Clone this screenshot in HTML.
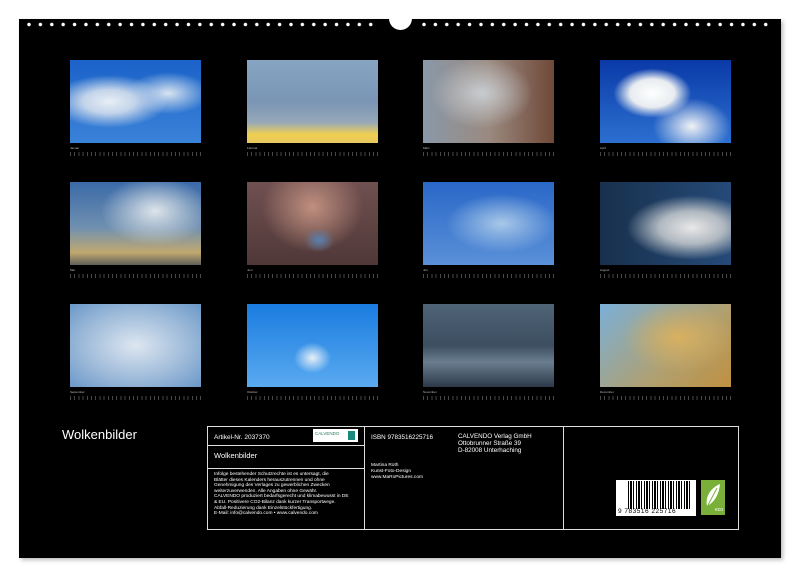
<!DOCTYPE html><html><head><meta charset="utf-8"><style>
*{margin:0;padding:0;box-sizing:border-box}
body{width:800px;height:577px;background:#fff;position:relative;overflow:hidden;font-family:"Liberation Sans",sans-serif;color:#fff}
.bg{position:absolute;left:19px;top:19px;width:762px;height:539px;background:#000;box-shadow:2px 2px 4px #bbb}
.dots{position:absolute;top:22px;height:5px;background:radial-gradient(circle at 3px 2.5px,#fff 1.5px,transparent 2px) 0 0/11.4px 5px repeat-x}
.hole{position:absolute;left:389px;top:12px;width:23px;height:18px;background:#fff;border-radius:0 0 12px 12px}
.p{position:absolute;width:131px;height:83px}
.lab{position:absolute;font-size:3px;color:#bbb}
.cal{position:absolute;width:131px;height:4px;background:repeating-linear-gradient(90deg,#666 0 1px,transparent 1px 4.2px);opacity:.7}
.t{position:absolute;font-size:7px;line-height:7.5px}
.box{position:absolute;border:1.5px solid #ddd}
</style></head><body>
<div class="bg"></div>
<div class="dots" style="left:26px;width:352px"></div>
<div class="dots" style="left:421px;width:352px"></div>
<div class="hole"></div>

<div class="p" style="left:70px;top:60px;background:radial-gradient(ellipse at 30% 50%,#e8eef5 0,#c3d4ea 20%,transparent 45%),radial-gradient(ellipse at 75% 40%,#d9e4f0 0,transparent 30%),linear-gradient(#1a62c8,#3a82d8)"></div>
<div class="p" style="left:247px;top:60px;background:linear-gradient(#87a5c3,#7a95b5 50%,#96a8b8 75%,#f0d050 90%,#e8c860)"></div>
<div class="p" style="left:423px;top:60px;background:radial-gradient(ellipse at 45% 40%,#c8ccd0,transparent 50%),linear-gradient(90deg,#8a98a8,#9a8a80 50%,#704838),linear-gradient(#888,#c07040)"></div>
<div class="p" style="left:600px;top:60px;background:radial-gradient(ellipse at 40% 40%,#fff 0,#e8ecf0 20%,transparent 35%),radial-gradient(ellipse at 70% 80%,#f0f2f5 0,transparent 30%),linear-gradient(#0a3aa8,#2c70d0)"></div>

<div class="p" style="left:70px;top:182px;background:radial-gradient(ellipse at 65% 35%,#dde4ea,transparent 45%),linear-gradient(#3a6aa8,#7090b0 55%,#c0a870 85%,#60605a)"></div>
<div class="p" style="left:247px;top:182px;background:radial-gradient(ellipse at 55% 70%,#5a80b0 0,transparent 15%),radial-gradient(ellipse at 50% 30%,#c09080,transparent 55%),linear-gradient(#705050,#503838)"></div>
<div class="p" style="left:423px;top:182px;background:radial-gradient(ellipse at 60% 50%,#a8c8e8,transparent 50%),linear-gradient(#2a68c8,#5a90d8)"></div>
<div class="p" style="left:600px;top:182px;background:radial-gradient(ellipse at 70% 55%,#e8e8e8 0,#b0b8c0 25%,transparent 50%),linear-gradient(90deg,#18304c,#254a78)"></div>

<div class="p" style="left:70px;top:304px;background:radial-gradient(ellipse at 50% 50%,#dde6f0,#9ab8d8 60%,#6a98c8)"></div>
<div class="p" style="left:247px;top:304px;background:radial-gradient(ellipse at 50% 65%,#e8f0f8 0,transparent 20%),linear-gradient(#1a7ce0,#5aaaf0)"></div>
<div class="p" style="left:423px;top:304px;background:linear-gradient(#506478,#3c4e60 50%,#6a7e90 70%,#2c3848)"></div>
<div class="p" style="left:600px;top:304px;background:radial-gradient(ellipse at 60% 40%,#d8b060,transparent 50%),linear-gradient(135deg,#7ab0d8,#b0a070 60%,#c09040)"></div>

<div class="lab" style="left:70px;top:146px">Januar</div><div class="cal" style="left:70px;top:152px"></div>
<div class="lab" style="left:247px;top:146px">Februar</div><div class="cal" style="left:247px;top:152px"></div>
<div class="lab" style="left:423px;top:146px">März</div><div class="cal" style="left:423px;top:152px"></div>
<div class="lab" style="left:600px;top:146px">April</div><div class="cal" style="left:600px;top:152px"></div>
<div class="lab" style="left:70px;top:268px">Mai</div><div class="cal" style="left:70px;top:274px"></div>
<div class="lab" style="left:247px;top:268px">Juni</div><div class="cal" style="left:247px;top:274px"></div>
<div class="lab" style="left:423px;top:268px">Juli</div><div class="cal" style="left:423px;top:274px"></div>
<div class="lab" style="left:600px;top:268px">August</div><div class="cal" style="left:600px;top:274px"></div>
<div class="lab" style="left:70px;top:390px">September</div><div class="cal" style="left:70px;top:396px"></div>
<div class="lab" style="left:247px;top:390px">Oktober</div><div class="cal" style="left:247px;top:396px"></div>
<div class="lab" style="left:423px;top:390px">November</div><div class="cal" style="left:423px;top:396px"></div>
<div class="lab" style="left:600px;top:390px">Dezember</div><div class="cal" style="left:600px;top:396px"></div>

<div style="position:absolute;left:62px;top:427px;font-size:13px">Wolkenbilder</div>

<div class="box" style="left:207px;top:426px;width:532px;height:104px"></div>
<div class="box" style="left:364px;top:426px;width:0;height:104px;border-width:0 0 0 1.5px"></div>
<div class="box" style="left:563px;top:426px;width:0;height:104px;border-width:0 0 0 1.5px"></div>
<div class="box" style="left:207px;top:445px;width:158px;height:0;border-width:1.5px 0 0 0"></div>
<div class="box" style="left:207px;top:468px;width:158px;height:0;border-width:1.5px 0 0 0"></div>
<div class="t" style="left:214px;top:434px;font-size:6.5px">Artikel-Nr. 2037370</div>
<div style="position:absolute;left:313px;top:429px;width:45px;height:13px;background:#fff;color:#2a7a5a;font-size:4.5px;padding:2px 2px;overflow:hidden">CALVENDO<span style="position:absolute;right:3px;top:2px;width:7px;height:9px;background:#1a8a7a"></span></div>
<div class="t" style="left:214px;top:452px;font-size:7.5px">Wolkenbilder</div>
<div class="t" style="left:214px;top:472px;font-size:4.8px;line-height:5.6px">Infolge bestehender Schutzrechte ist es untersagt, die<br>Blätter dieses Kalenders herauszutrennen und ohne<br>Genehmigung des Verlages zu gewerblichen Zwecken<br>weiterzuverwenden. Alle Angaben ohne Gewähr.<br>CALVENDO produziert bedarfsgerecht und klimabewusst in DE<br>&amp; EU. Positivere CO2-Bilanz dank kurzer Transportwege.<br>Abfall-Reduzierung dank Einzelstückfertigung.<br>E-Mail: info@calvendo.com • www.calvendo.com</div>
<div class="t" style="left:371px;top:434px;font-size:6.3px">ISBN 9783516225716</div>
<div class="t" style="left:458px;top:433px;font-size:6.3px;line-height:7px">CALVENDO Verlag GmbH<br>Ottobrunner Straße 39<br>D-82008 Unterhaching</div>
<div class="t" style="left:371px;top:463px;font-size:4.8px;line-height:5.8px">Martina Roth<br>Kunst-Foto-Design<br>www.MaRoPictures.com</div>
<div style="position:absolute;left:616px;top:480px;width:80px;height:36px;background:#fff"></div>
<div style="position:absolute;left:628px;top:481px;width:62px;height:28px;background:repeating-linear-gradient(90deg,#000 0 1px,#fff 1px 2px,#000 2px 4px,#fff 4px 5px,#000 5px 6px,#fff 6px 8px)"></div>
<div style="position:absolute;left:618px;top:508px;font-size:6.5px;color:#000;letter-spacing:.5px">9 783516 225716</div>
<div style="position:absolute;left:701px;top:480px;width:24px;height:35px;background:#7ab03a;color:#fff;font-size:5px;text-align:right;padding:27px 2px 0 0">eco</div>
<svg style="position:absolute;left:703px;top:482px" width="20" height="28"><path d="M4 24 C2 14 8 6 17 2 C16 12 12 20 4 24 Z" fill="#fff"/><path d="M4 25 L14 6" stroke="#7ab03a" stroke-width="1"/></svg>
</body></html>
